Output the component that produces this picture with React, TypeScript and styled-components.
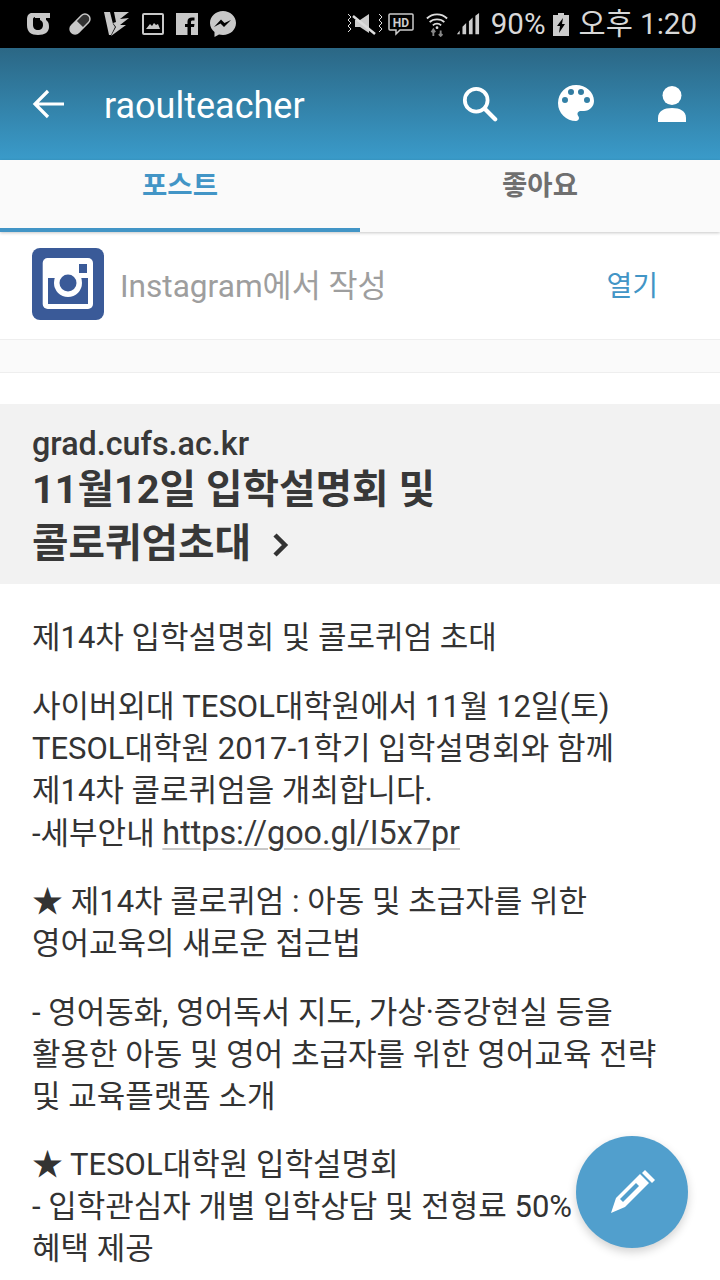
import React from "react";
import styled, { createGlobalStyle } from "styled-components";

const Global = createGlobalStyle`
  html, body { margin: 0; padding: 0; background: #fff; }
  body { font-family: Roboto, "Noto Sans CJK KR", sans-serif; }
  * { box-sizing: border-box; }
`;
const Screen = styled.div`
  position: relative; width: 720px; height: 1280px; overflow: hidden; background: #fff;
  font-family: Roboto, "Noto Sans CJK KR", sans-serif;
`;
const StatusBar = styled.div`
  height: 48px; background: #000; display: flex; align-items: center; padding: 0 23px 0 26px;
  color: #d4d4d4;
`;
const StatusGroup = styled.div<{ $gap: number }>`
  display: flex; align-items: center; gap: ${p => p.$gap}px;
`;
const Slot = styled.span<{ $ml?: number }>`
  display: inline-flex; align-items: center; margin-left: ${p => p.$ml ?? 0}px;
`;
const StatusText = styled.span<{ $ml?: number }>`
  font-size: 29.5px; line-height: 50px; color: #d8d8d8; white-space: nowrap;
  margin-left: ${p => p.$ml ?? 0}px;
`;
const Spacer = styled.div` flex: 1; `;
const AppBar = styled.div`
  height: 112px; display: flex; align-items: center; padding: 0 34px 0 32px; color: #fff;
  background: linear-gradient(180deg, #2b6785 0%, #3a9bca 100%);
`;
const Title = styled.div`
  margin-left: 40px; font-size: 36px; line-height: 44px; padding-top: 4px; font-weight: 400; flex: 1; color: #fff;
`;
const BarIcons = styled.div` display: flex; align-items: center; gap: 60px; `;
const Tabs = styled.div`
  height: 72px; display: flex; background: #fafafa; box-shadow: 0 1px 3px rgba(0,0,0,.22);
  position: relative;
`;
const Tab = styled.div<{ $active?: boolean }>`
  width: 360px; height: 72px; text-align: center; font-size: 27.5px; font-weight: 700; line-height: 51px;
  color: ${p => (p.$active ? "#4295c6" : "#6f6f6f")};
  border-bottom: 4px solid ${p => (p.$active ? "#4295c6" : "transparent")};
`;
const SourceRow = styled.div`
  height: 108px; display: flex; align-items: center; padding: 16px 62px 19px 32px;
  border-bottom: 1px solid #eeeeee;
`;
const SourceIcon = styled.svg` flex: none; `;
const SourceText = styled.div`
  flex: 1; margin-left: 16px; font-size: 31.6px; line-height: 42px; padding-top: 6px; color: #9e9e9e;
`;
const OpenLink = styled.div` font-size: 28px; line-height: 42px; padding-top: 6px; color: #4295c6; `;
const Band = styled.div`
  height: 33px; background: #fafafa; border-bottom: 1px solid #eeeeee;
`;
const LinkCard = styled.div`
  margin-top: 31px; height: 180px; background: #f2f2f2; padding: 24px 32px 0; color: #333;
`;
const Domain = styled.div` font-size: 32.3px; line-height: 32px; font-weight: 500; color: #383838; `;
const CardTitle = styled.div`
  font-size: 39.7px; line-height: 54px; font-weight: 700; color: #383838; margin-top: 3px;
  svg { vertical-align: -1px; margin-left: 19px; }
`;
const Body = styled.div`
  padding: 33px 32px 0; color: #222;
`;
const Para = styled.p`
  margin: 0 0 26.500px; font-size: 31px; line-height: 42px; color: #333; white-space: nowrap;
`;
const Anchor = styled.span`
  font-size: 32.3px; color: #383838; text-decoration: underline; text-decoration-color: #c8c8c8;
  text-decoration-thickness: 2px; text-underline-offset: 4px;
`;
const Fab = styled.div`
  position: absolute; left: 576px; top: 1136px; width: 112px; height: 112px; border-radius: 50%;
  background: #519fcd; box-shadow: 0 4px 10px rgba(0,0,0,.18);
  display: flex; align-items: center; justify-content: center;
`;

const G = "#c8c8c8";
const StatusLeft = () => (
  <StatusGroup $gap={12}>
    <svg width="24" height="24" viewBox="0 0 24 24">
      <path fillRule="evenodd" d="M6 1h18v5h-4v2c3 2 3 5 3 7 0 5-4 8-11 8S1 20 1 13V8c0-5 2-7 5-7zm1 6v6c0 3 2 5 5 5s5-2 5-5-1-4-3-5V6h-5V5H9C8 5 7 6 7 7z" fill={G} />
    </svg>
    <svg width="30" height="24" viewBox="-6 0 30 24">
      <g transform="rotate(-45 12 12)">
        <rect x="0" y="7" width="24" height="10" rx="5" fill="none" stroke={G} strokeWidth="1.500" />
        <path d="M5 7h7v10H5a5 5 0 0 1 0-10z" fill={G} />
        <path d="M12 7h7a5 5 0 0 1 0 10h-7z" fill={G} opacity=".25" />
      </g>
    </svg>
    <svg width="26" height="26" viewBox="0 0 26 26">
      <path d="M0 1h6l3 12 2 3-4 8H5zM10 1h15l-9 7 9-1-9 7h6L7 25l5-9-3-4 3-1z" fill={G} />
    </svg>
    <svg width="22" height="22" viewBox="0 0 22 22">
      <rect x="1" y="1" width="20" height="20" rx="1" fill="none" stroke={G} strokeWidth="2" />
      <path d="M4 16l4-5 2 2 2-3 2 2 2-1 2 5z" fill={G} />
    </svg>
    <svg width="22" height="22" viewBox="0 0 22 22">
      <path d="M0 0h22v22h-7v-8h3l.5-3H15V9c0-1 .5-1.500 1.500-1.500H18.500V4.500H16c-3 0-4.500 1.500-4.500 4V11H9v3h2.500v8H0z" fill={G} />
    </svg>
    <svg width="26" height="26" viewBox="0 0 26 26">
      <path d="M13 0C6 0 0 5 0 12c0 4 2 7 4.500 9v5l4.500-2.500c1 .3 2.500.5 4 .5 7 0 13-5 13-12S20 0 13 0zm1 16-3.500-3.500L4 16l7-7.500 3.500 3.500L21 9z" fill={G} />
    </svg>
  </StatusGroup>
);
const StatusRight = () => (
  <StatusGroup $gap={6}>
    <svg width="36" height="24" viewBox="0 0 36 24">
      <path d="M2 2l3 3-3 3 3 3-3 3 3 3-3 3M33 2l3 3-3 3 3 3-3 3 3 3-3 3" fill="none" stroke="#ddd" strokeWidth="1" />
      <path d="M9 8h5l9-6v19l-9-6H9z" fill="#ccc" />
      <path d="M7 4l22 18" stroke="#ddd" strokeWidth="2.500" />
    </svg>
    <svg width="26" height="24" viewBox="0 0 26 24">
      <path d="M2 2h22a1 1 0 0 1 1 1v14a1 1 0 0 1-1 1H12l-4 4v-4H2a1 1 0 0 1-1-1V3a1 1 0 0 1 1-1z" fill="none" stroke="#ccc" strokeWidth="1.500" />
      <text x="13" y="15" fontSize="12" fontWeight="700" fill="#ccc" textAnchor="middle" fontFamily="Roboto">HD</text>
    </svg>
    <Slot $ml={6}>
      <svg width="22" height="26" viewBox="0 0 24 26">
        <path d="M1 7c6-6 16-6 22 0M4 11c4-4 12-4 16 0M7.500 14.500c2.500-2.500 6.500-2.500 9 0" fill="none" stroke="#ddd" strokeWidth="2" />
        <circle cx="12" cy="17" r="1.500" fill="#ddd" />
        <path d="M8 26v-6M6 22l2-3 2 3M16 20v6M14 24l2 2 2-2" fill="none" stroke="#888" strokeWidth="2" />
      </svg>
    </Slot>
    <Slot $ml={2}>
      <svg width="24" height="26" viewBox="0 0 26 26">
        <path d="M1 24l3-4v4zM7 24v-8l4-4v12zM14 24V10l4-4v18zM21 24V4l4-3v23z" fill="#ccc" />
      </svg>
    </Slot>
    <StatusText $ml={5}>90%</StatusText>
    <Slot $ml={1}>
      <svg width="16" height="24" viewBox="0 0 16 24">
        <path d="M5 1h6v2h5v21H0V3h5z" fill="#ccc" />
        <path d="M10 6 4 14h3l-1 7 6-9H9z" fill="#000" />
      </svg>
    </Slot>
    <StatusText $ml={4}>오후 1:20</StatusText>
  </StatusGroup>
);

export default function App() {
  return (
    <Screen>
      <Global />
      <StatusBar>
        <StatusLeft />
        <Spacer />
        <StatusRight />
      </StatusBar>
      <AppBar>
        <svg width="32" height="32" viewBox="0 0 32 32">
          <path d="M32 16H3M16 3 3 16l13 13" fill="none" stroke="#fff" strokeWidth="3.200" />
        </svg>
        <Title>raoulteacher</Title>
        <BarIcons>
          <svg width="36" height="36" viewBox="0 0 38 38">
            <circle cx="15" cy="15" r="12" fill="none" stroke="#fff" strokeWidth="4" />
            <path d="M24 24l11 11" stroke="#fff" strokeWidth="4.500" strokeLinecap="round" />
          </svg>
          <svg width="36" height="38" viewBox="3 3 18 19">
            <path fill="#fff" d="M12 3a9 9 0 0 0 0 18c.83 0 1.500-.67 1.500-1.500 0-.39-.15-.74-.39-1.010-.23-.26-.38-.61-.38-.99 0-.83.67-1.500 1.500-1.500H16c2.760 0 5-2.240 5-5 0-4.420-4.030-8-9-8zm-5.500 9a1.500 1.500 0 1 1 0-3 1.500 1.500 0 0 1 0 3zm3-4a1.500 1.500 0 1 1 0-3 1.500 1.500 0 0 1 0 3zm5 0a1.500 1.500 0 1 1 0-3 1.500 1.500 0 0 1 0 3zm3 4a1.500 1.500 0 1 1 0-3 1.500 1.500 0 0 1 0 3z" />
          </svg>
          <svg width="32" height="36" viewBox="-4 0 32 36">
            <circle cx="14" cy="9.500" r="9.500" fill="#fff" />
            <path d="M0 36v-4c0-7 6-10 14-10s14 3 14 10v4z" fill="#fff" />
          </svg>
        </BarIcons>
      </AppBar>
      <Tabs>
        <Tab $active>포스트</Tab>
        <Tab>좋아요</Tab>
      </Tabs>
      <SourceRow>
        <SourceIcon width="72" height="72" viewBox="0 0 72 72">
          <rect width="72" height="72" rx="8" fill="#3a5a98" />
          <rect x="10.700" y="10" width="50.300" height="51" rx="5" fill="#fff" />
          <rect x="16" y="30" width="40" height="26" fill="#3a5a98" />
          <rect x="47" y="16" width="8" height="9" fill="#3a5a98" />
          <circle cx="36" cy="35" r="14" fill="#fff" />
          <circle cx="36" cy="35" r="8.500" fill="#3a5a98" />
        </SourceIcon>
        <SourceText>Instagram에서 작성</SourceText>
        <OpenLink>열기</OpenLink>
      </SourceRow>
      <Band />
      <LinkCard>
        <Domain>grad.cufs.ac.kr</Domain>
        <CardTitle>
          11월12일 입학설명회 및<br />
          콜로퀴엄초대
          <svg width="20" height="26" viewBox="0 0 20 26">
            <path d="M5 3l10 10L5 23" fill="none" stroke="#333" strokeWidth="4.500" />
          </svg>
        </CardTitle>
      </LinkCard>
      <Body>
        <Para>제14차 입학설명회 및 콜로퀴엄 초대</Para>
        <Para>
          사이버외대 TESOL대학원에서 11월 12일(토)<br />
          TESOL대학원 2017-1학기 입학설명회와 함께<br />
          제14차 콜로퀴엄을 개최합니다.<br />
          -세부안내 <Anchor>https://goo.gl/I5x7pr</Anchor>
        </Para>
        <Para>
          ★ 제14차 콜로퀴엄 : 아동 및 초급자를 위한<br />
          영어교육의 새로운 접근법
        </Para>
        <Para>
          - 영어동화, 영어독서 지도, 가상·증강현실 등을<br />
          활용한 아동 및 영어 초급자를 위한 영어교육 전략<br />
          및 교육플랫폼 소개
        </Para>
        <Para>
          ★ TESOL대학원 입학설명회<br />
          - 입학관심자 개별 입학상담 및 전형료 50% 감면<br />
          혜택 제공
        </Para>
      </Body>
      <Fab>
        <svg width="50" height="50" viewBox="0 0 50 50">
          <path d="M33 7l9 9-24 24-14 6 5-15z" fill="#fff" />
          <path d="M36 3l3-3 10 10-3 3z" fill="#fff" transform="translate(-1 3)" />
          <path d="M29 16l3 3-16 16-3-3z" fill="#519fcd" />
        </svg>
      </Fab>
    </Screen>
  );
}
